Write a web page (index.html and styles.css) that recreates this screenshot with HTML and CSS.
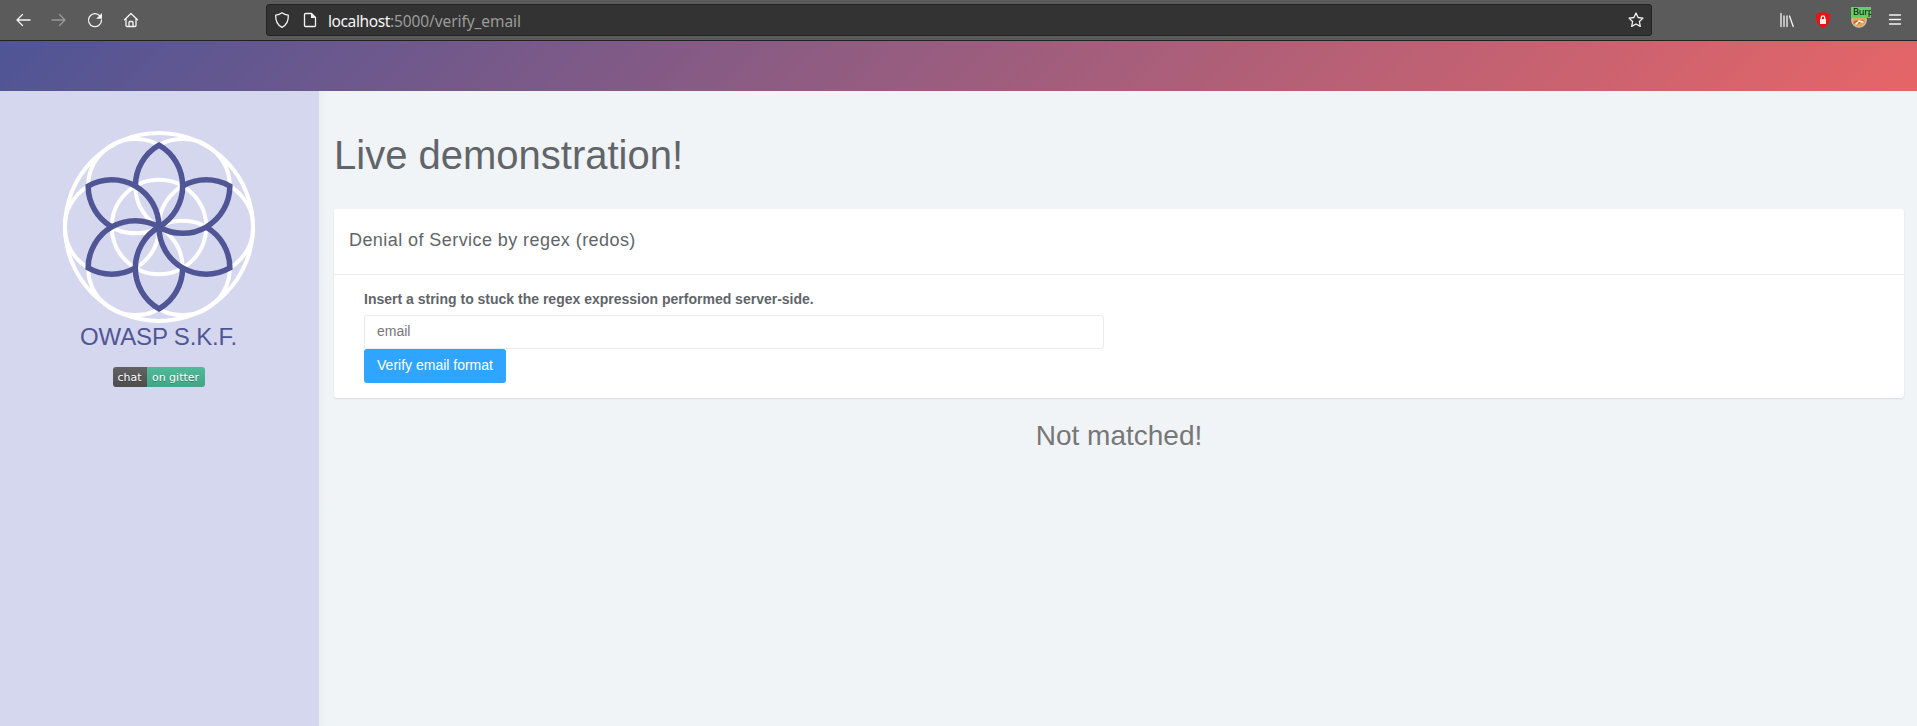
FILE: index.html
```html
<!DOCTYPE html>
<html lang="en">
<head>
<meta charset="utf-8">
<title>Live demonstration</title>
<link rel="stylesheet" href="styles.css">
</head>
<body>
<header class="toolbar">
  <nav class="nav-icons">
    <svg class="icon" viewBox="0 0 16 16"><path d="M15 8H2M7.500 2.500L2 8l5.500 5.500"/></svg>
    <svg class="icon icon-off" viewBox="0 0 16 16"><path d="M1 8h13M8.500 2.500L14 8l-5.500 5.500"/></svg>
    <svg class="icon" viewBox="0 0 16 16"><path d="M13 4A6.500 6.500 0 1 0 14.500 8"/><path class="solid" d="M15 1v5.800H9.200z"/></svg>
    <svg class="icon" viewBox="0 0 16 16"><path d="M1.500 7.800L8 1.500l6.500 6.300M3 6.800V13.500q0 1 1 1h8q1 0 1-1V6.800M6 14.500v-4q0-1 1-1h2q1 0 1 1v4"/></svg>
  </nav>
  <div class="urlbar">
    <svg class="icon" viewBox="0 0 16 16"><path d="M8 .8C6.500 2 4 3 1.700 3.200 1.400 9 3.500 13 8 15.300c4.500-2.300 6.600-6.300 6.300-12.100C12 3 9.500 2 8 .8z"/></svg>
    <svg class="icon icon-page" viewBox="0 0 16 16"><path d="M3.500 1.500h6l4 4V13.500q0 1-1 1h-9q-1 0-1-1V2.500q0-1 1-1z"/><path class="solid" d="M9 1.500l4.500 4.500H9z"/></svg>
    <span class="url"><span class="host">localhost</span>:5000/verify_email</span>
    <svg class="icon star" viewBox="0 0 16 16"><path d="M8 1l2.100 4.500 4.900.6-3.600 3.400.9 4.900L8 12l-4.300 2.400.9-4.900L1 6.100l4.900-.6z"/></svg>
  </div>
  <div class="tools">
    <svg class="icon" viewBox="0 0 16 16"><path d="M2 1.500v13M5 4v10.500M8 4v10.500M10.500 4l3.700 10.500"/></svg>
    <svg class="icon" viewBox="0 0 16 16"><path fill="#ed1111" stroke="none" d="M8 0l7 2c.5 7-1.500 11.500-7 14C2.500 13.500.5 9 1 2z"/><path class="solid" d="M5 7h6v5H5z"/><path d="M6.300 7V5.500a1.700 1.700 0 0 1 3.400 0V7"/></svg>
    <div class="proxy">
      <svg class="icon" viewBox="0 0 16 16"><circle cx="8" cy="8" r="7.200" fill="#eda14c" stroke="#c9c5c0"/><path d="M3 11q3-4 5 0 3-4 5-1" stroke="#a8672f"/><path d="M5 12l3-3 4 1" stroke="#fff"/></svg>
      <span class="proxy-tag">Burp</span>
    </div>
    <svg class="icon" viewBox="0 0 16 16"><path d="M2.500 3h11M2.500 7.500h11M2.500 12h11"/></svg>
  </div>
</header>
<div class="banner"></div>
<div class="page">
  <aside class="sidebar">
    <svg class="logo" viewBox="-96 -96 192 192">
      <defs><path id="petal" d="M-23.600-40.900A47.200 47.200 0 0 1 0-81.800A47.200 47.200 0 0 1 0 0"/></defs>
      <g class="rings">
        <circle r="94"/><circle r="47.200"/>
        <circle cx="47" r="47.200"/><circle cx="-47" r="47.200"/>
        <circle cx="23.600" cy="40.900" r="47.200"/><circle cx="-23.600" cy="40.900" r="47.200"/>
        <circle cx="23.600" cy="-40.900" r="47.200"/><circle cx="-23.600" cy="-40.900" r="47.200"/>
      </g>
      <g class="petals">
        <use href="#petal"/><use href="#petal" transform="rotate(60)"/><use href="#petal" transform="rotate(120)"/>
        <use href="#petal" transform="rotate(180)"/><use href="#petal" transform="rotate(240)"/><use href="#petal" transform="rotate(300)"/>
      </g>
    </svg>
    <div class="brand">OWASP S.K.F.</div>
    <div class="chat"><span class="chat-l">chat</span><span class="chat-r">on gitter</span></div>
  </aside>
  <main class="content">
    <h1 class="title">Live demonstration!</h1>
    <section class="card">
      <h2 class="card-head">Denial of Service by regex (redos)</h2>
      <form class="card-body">
        <label class="label" for="email">Insert a string to stuck the regex expression performed server-side.</label>
        <input class="input" id="email" placeholder="email">
        <button class="btn" type="button">Verify email format</button>
      </form>
    </section>
    <p class="result">Not matched!</p>
  </main>
</div>
</body>
</html>
```

FILE: styles.css
```css
* { box-sizing: border-box; }
body { margin: 0; height: 726px; overflow: hidden; display: flex; flex-direction: column; font-family: "Liberation Sans", Arial, sans-serif; font-size: 14px; color: #616569; background: #f0f4f7; }
.toolbar { flex: none; height: 41px; display: flex; align-items: center; background: #5b5b5b; border-bottom: 1px solid #222; }
.icon { flex: none; width: 16px; height: 16px; fill: none; stroke: #f4f4f4; stroke-width: 1.3; stroke-linecap: round; stroke-linejoin: round; overflow: visible; }
.icon-off { stroke: #999; }
.solid { fill: #f4f4f4; stroke: none; }
.nav-icons { flex: none; display: flex; gap: 20px; width: 266px; padding-left: 15px; }
.urlbar { flex: none; display: flex; align-items: center; width: 1386px; height: 32px; padding: 0 7px; background: #333; border: 1px solid #222; border-radius: 3px; }
.icon-page { margin-left: 12px; }
.url { flex: 1; margin-left: 10px; padding-top: 1px; font: 15.500px "Noto Sans", sans-serif; letter-spacing: -.08px; color: #9b9b9b; }
.host { letter-spacing: -.4px; color: #f6f6f6; }
.tools { display: flex; gap: 20px; margin-left: 127px; }
.proxy { position: relative; display: flex; }
.proxy-tag { position: absolute; left: 0; top: -5px; width: 20px; height: 11px; padding-left: 2px; overflow: hidden; background: #62cf62; color: #111; font: 9px/11px "DejaVu Sans", sans-serif; letter-spacing: -.3px; }
.banner { flex: none; height: 50px; background: linear-gradient(135deg, #4f5596 0%, #e66567 100%); }
.page { flex: 1; display: flex; }
.sidebar { width: 319px; display: flex; flex-direction: column; align-items: center; padding: 40px 2px 0 0; background: #d5d7ee; }
.logo { width: 192px; height: 192px; fill: none; }
.rings { stroke: #fff; stroke-width: 4; }
.petals { stroke: #505695; stroke-width: 5.500; stroke-linejoin: miter; }
.brand { padding-top: 1px; font-size: 24px; line-height: 26px; letter-spacing: -.15px; color: #505695; }
.chat { display: flex; margin-top: 17px; height: 20px; border-radius: 3px; overflow: hidden; color: #fff; font: 11px/21px "DejaVu Sans", sans-serif; text-shadow: 0 1px rgba(1,1,1,.3); }
.chat-l { width: 34px; text-align: center; background: linear-gradient(#626262, #4d4d4d); }
.chat-r { width: 58px; text-align: center; background: linear-gradient(#50ba99, #42a585); }
.content { flex: 1; padding: 39px 13px 0 15px; background: linear-gradient(90deg, #eaeff2, #f0f4f7 8px); }
.title { margin: 0 0 29px; font-size: 40px; line-height: 50px; font-weight: 400; }
.card { height: 189px; background: #fff; border-radius: 3px; box-shadow: 0 1px 2px rgba(0,0,0,.1); }
.card-head { height: 66px; margin: 0; padding: 0 15px; border-bottom: 1px solid #ebebeb; font-size: 18px; line-height: 62px; font-weight: 400; letter-spacing: .43px; }
.card-body { display: flex; flex-direction: column; align-items: flex-start; padding: 14px 30px 0; }
.label { line-height: 20px; margin-bottom: 6px; font-weight: 700; }
.input { width: 740px; height: 34px; padding: 0 12px 2px; border: 1px solid #ebebeb; border-radius: 3px; font: inherit; background: #fff; }
.input::placeholder { color: #777; }
.btn { width: 142px; height: 34px; padding: 0 0 2px; border: 0; border-radius: 3px; background: #30a5ff; color: #fff; font: inherit; }
.result { margin: 20px 0 0; font-size: 28px; line-height: 36px; text-align: center; color: #777; }
```
